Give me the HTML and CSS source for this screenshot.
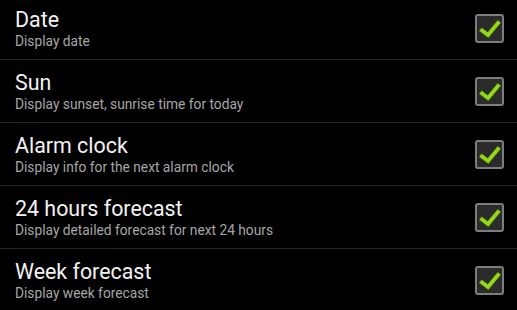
FILE: index.html
```html
<!DOCTYPE html>
<html>
<head>
<meta charset="utf-8">
<link rel="stylesheet" href="styles.css">
</head>
<body>
<div class="list">
  <div class="row">
    <div class="text"><div class="title">Date</div><div class="sub">Display date</div></div>
    <div class="check"><svg viewBox="0 0 29 29" width="29" height="29"><path d="M7 16.5 L13 21 L23 9" class="ck-shadow"/><path d="M7 16.5 L13 21 L23 9" class="ck"/></svg></div>
  </div>
  <div class="row">
    <div class="text"><div class="title">Sun</div><div class="sub">Display sunset, sunrise time for today</div></div>
    <div class="check"><svg viewBox="0 0 29 29" width="29" height="29"><path d="M7 16.5 L13 21 L23 9" class="ck-shadow"/><path d="M7 16.5 L13 21 L23 9" class="ck"/></svg></div>
  </div>
  <div class="row">
    <div class="text"><div class="title">Alarm clock</div><div class="sub">Display info for the next alarm clock</div></div>
    <div class="check"><svg viewBox="0 0 29 29" width="29" height="29"><path d="M7 16.5 L13 21 L23 9" class="ck-shadow"/><path d="M7 16.5 L13 21 L23 9" class="ck"/></svg></div>
  </div>
  <div class="row">
    <div class="text"><div class="title">24 hours forecast</div><div class="sub">Display detailed forecast for next 24 hours</div></div>
    <div class="check"><svg viewBox="0 0 29 29" width="29" height="29"><path d="M7 16.5 L13 21 L23 9" class="ck-shadow"/><path d="M7 16.5 L13 21 L23 9" class="ck"/></svg></div>
  </div>
  <div class="row">
    <div class="text"><div class="title">Week forecast</div><div class="sub">Display week forecast</div></div>
    <div class="check"><svg viewBox="0 0 29 29" width="29" height="29"><path d="M7 16.5 L13 21 L23 9" class="ck-shadow"/><path d="M7 16.5 L13 21 L23 9" class="ck"/></svg></div>
  </div>
</div>
</body>
</html>
```
FILE: styles.css
```css
html, body {
  margin: 0;
  padding: 0;
  background: #000;
  width: 517px;
  height: 310px;
  overflow: hidden;
  font-family: Roboto, "Liberation Sans", sans-serif;
}
.list {
  margin-top: -3px;
  display: flex;
  flex-direction: column;
}
.row {
  height: 62px;
  border-bottom: 1px solid #262626;
  display: flex;
  align-items: center;
  justify-content: space-between;
  padding: 0 13px 0 15px;
}
.text {
  display: flex;
  flex-direction: column;
  margin-top: 1px;
}
.title {
  color: #f2f2f2;
  font-size: 21.4px;
  line-height: 26px;
}
.sub {
  color: #a6a6a6;
  font-size: 13.75px;
  line-height: 17px;
}
.check {
  width: 25px;
  height: 25px;
  border: 2px solid #7d7d7d;
  border-radius: 3px;
  background: #2b2b2b;
  position: relative;
  margin-top: 1px;
}
.check svg {
  position: absolute;
  left: -2px;
  top: -2px;
}
.ck {
  fill: none;
  stroke: #93d81c;
  stroke-width: 3.6;
  stroke-linecap: square;
  stroke-linejoin: miter;
}
.ck-shadow {
  fill: none;
  stroke: #3d5a10;
  stroke-width: 5;
  stroke-linecap: square;
}
```
